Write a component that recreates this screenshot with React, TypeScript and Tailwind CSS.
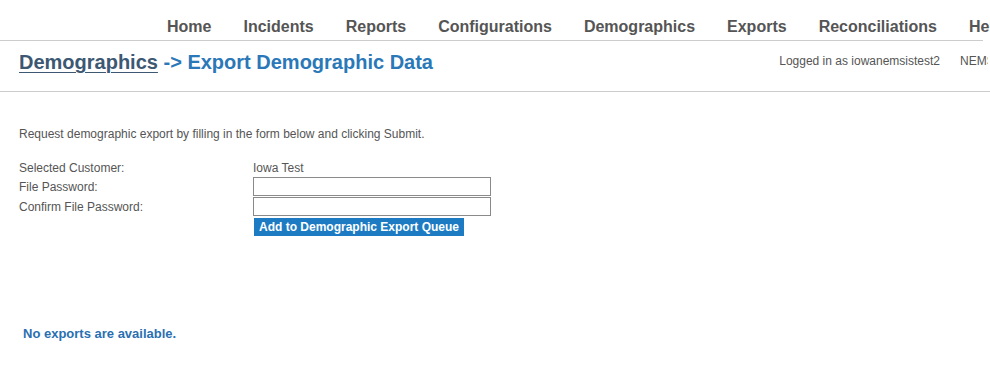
import React from "react";

const navItems = ["Home", "Incidents", "Reports", "Configurations", "Demographics", "Exports", "Reconciliations", "Help"];

export default function App() {
  return (
    <div className="w-[990px] h-[382px] overflow-hidden bg-white text-[#555555]" style={{ fontFamily: '"Liberation Sans", Arial, sans-serif' }}>
      <div className="w-[1200px]">
        <div className="w-[983px] border-b border-[#cccccc]">
          <ul className="flex pl-[151px] pt-[17px] pb-[3px] whitespace-nowrap">
            {navItems.map((n) => (
              <li key={n} className="px-4 text-[16px] leading-[20px] font-bold text-[#555555]">
                {n}
              </li>
            ))}
          </ul>
        </div>
        <div className="w-[990px] h-[51px] border-b border-[#cccccc] flex items-start overflow-hidden">
          <h1 className="pl-[19px] pt-[9px] text-[20px] leading-[24px] font-bold text-[#2a78b8] whitespace-nowrap">
            <span className="underline text-[#3c5873] decoration-1 underline-offset-[3px]">Demographics</span>
            <span> -&gt; Export Demographic Data</span>
          </h1>
          <div className="ml-auto mr-[2px] flex gap-5 pt-[13px] text-[12px] leading-[14px] text-[#555555] whitespace-nowrap">
            <span>Logged in as iowanemsistest2</span>
            <span className="w-[28px] overflow-hidden">NEMSIS</span>
          </div>
        </div>
        <div className="pl-[19px] pt-[35px] text-[12px] leading-[14px] text-[#555555]">
          <p>Request demographic export by filling in the form below and clicking Submit.</p>
          <div className="mt-[19px] grid grid-cols-[234px_238px] gap-y-[1px] items-center">
            <div className="h-[16px] flex items-center">Selected Customer:</div>
            <div className="h-[16px] flex items-center">Iowa Test</div>
            <div className="h-[19px] flex items-center">File Password:</div>
            <input type="password" className="h-[19px] w-[238px] border border-[#8a8a8a] bg-white" />
            <div className="h-[19px] flex items-center">Confirm File Password:</div>
            <input type="password" className="h-[19px] w-[238px] border border-[#8a8a8a] bg-white" />
            <div />
            <div className="pt-[1px]">
              <button className="ml-[1px] h-[18px] px-[5px] bg-[#1c7bc3] text-white font-bold text-[12px] leading-[18px]">
                Add to Demographic Export Queue
              </button>
            </div>
          </div>
          <p className="mt-[90px] ml-[4px] font-bold text-[13px] leading-[16px] text-[#2a6fb1]">No exports are available.</p>
        </div>
      </div>
    </div>
  );
}
